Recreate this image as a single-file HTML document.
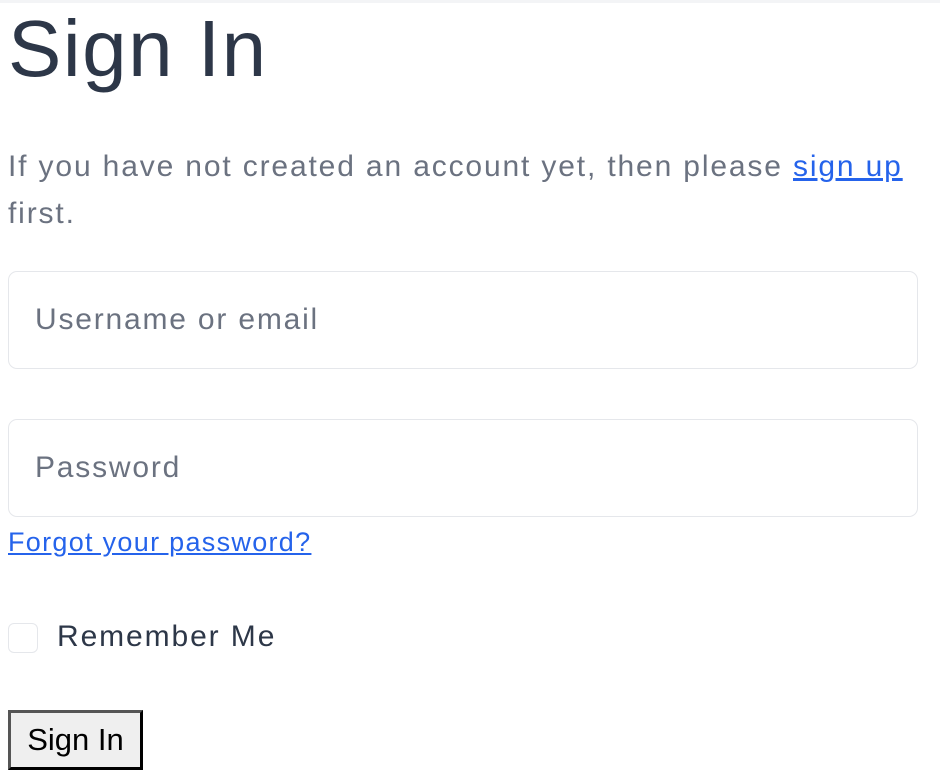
<!DOCTYPE html>
<html><head><style>
body{margin:0;background:#fff;font-family:"Liberation Sans",sans-serif;width:940px;height:780px;overflow:hidden;position:relative}
.top{position:absolute;left:0;top:0;width:940px;height:3px;background:#f3f4f6}
h1{position:absolute;left:8px;top:-6px;margin:0;font-size:80px;font-weight:400;color:#2d3748;line-height:110px;letter-spacing:1.5px}
p{position:absolute;left:8px;top:143px;margin:0;width:910px;font-size:30px;letter-spacing:1.85px;line-height:47px;color:#6b7280}
a{color:#2563eb;text-decoration:underline}
.inp{position:absolute;left:8px;width:908px;height:96px;border:1.5px solid #e5e7eb;border-radius:9px;box-sizing:content-box}
.inp span{position:absolute;left:26px;top:31px;font-size:30px;letter-spacing:1.8px;color:#6b7280}
.forgot{position:absolute;left:8px;top:527px;font-size:27px;letter-spacing:1.3px}
.cb{position:absolute;left:8px;top:623px;width:28px;height:28px;border:1.5px solid #e5e7eb;border-radius:6px}
.rm{position:absolute;left:57px;top:620px;font-size:30px;letter-spacing:1.9px;color:#2d3748}
.btn{position:absolute;left:8px;top:710px;width:129px;height:54px;background:#efefef;border:3px solid;border-color:#555 #000 #000 #555;box-sizing:content-box;font-size:31px;line-height:54px;text-align:center;color:#000}
</style></head><body>
<div class="top"></div>
<h1>Sign In</h1>
<p>If you have not created an account yet, then please <a>sign up</a> first.</p>
<div class="inp" style="top:271px"><span>Username or email</span></div>
<div class="inp" style="top:419px"><span>Password</span></div>
<a class="forgot">Forgot your password?</a>
<div class="cb"></div>
<div class="rm">Remember Me</div>
<div class="btn">Sign In</div>
</body></html>
